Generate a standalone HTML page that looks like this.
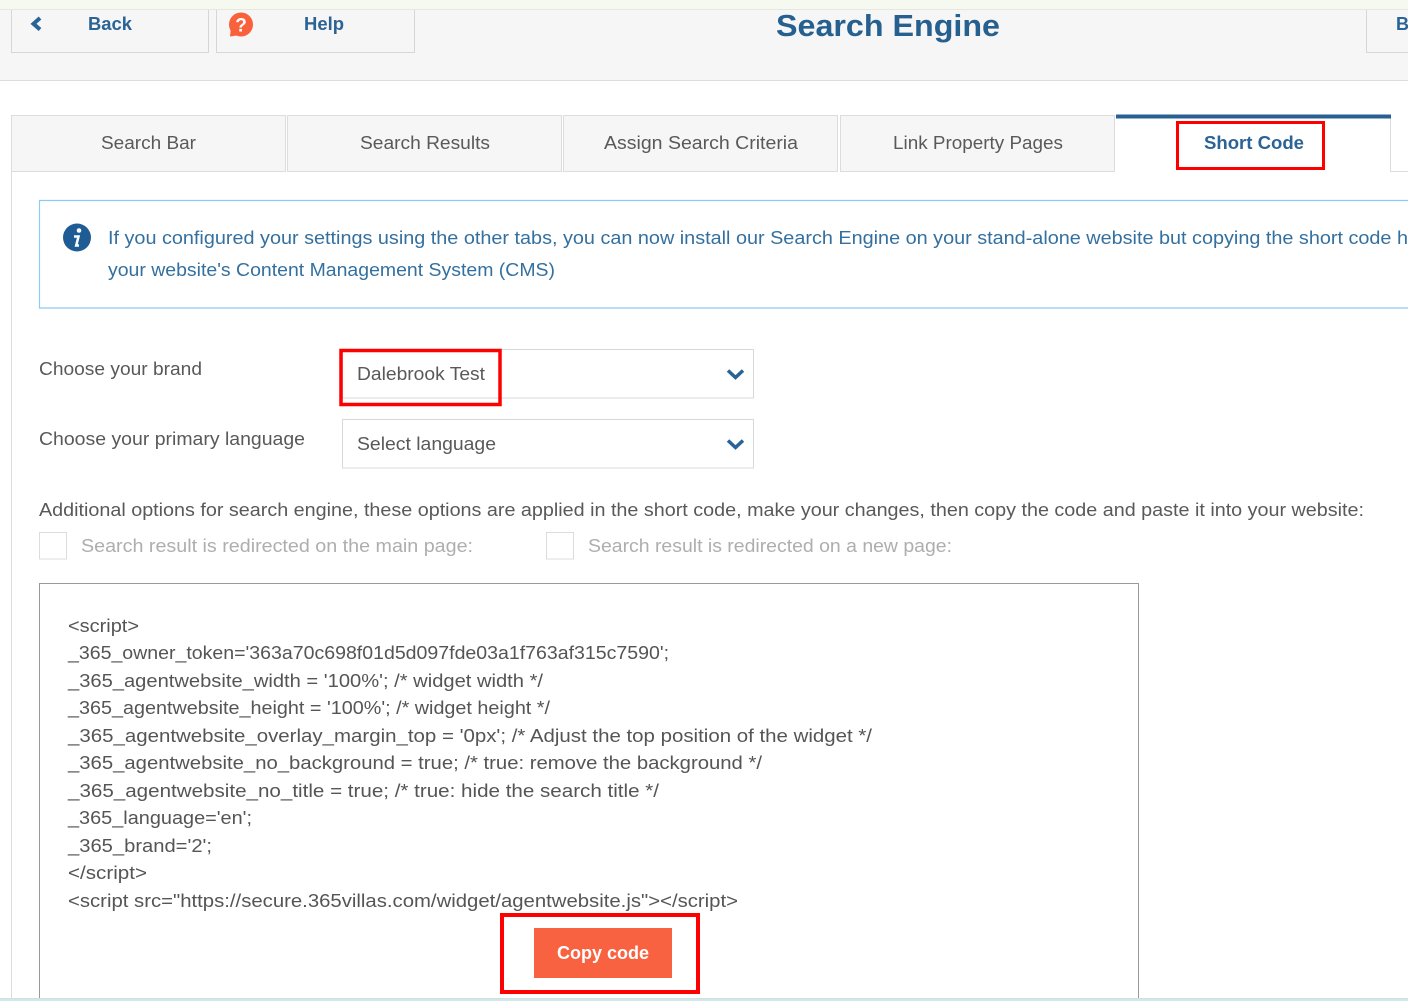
<!DOCTYPE html>
<html lang="en"><head><meta charset="utf-8"><title>Search Engine</title>
<style>
html,body{margin:0;padding:0;background:#fff;width:1408px;height:1001px;overflow:hidden}
svg{display:block}
text{font-family:"Liberation Sans",sans-serif}
.g{fill:#595959;font-size:18px}
.c{fill:#555;font-size:18.5px}
.b{fill:#2a6395;font-weight:bold;font-size:18px}
.i{fill:#34709f;font-size:18px}
.l{fill:#aeaeae;font-size:18px}
</style></head><body>
<svg xmlns="http://www.w3.org/2000/svg" width="1408" height="1001" viewBox="0 0 1408 1001">
<rect width="1408" height="1001" fill="#fff"/>
<!-- header -->
<rect width="1408" height="9" fill="#f6f9f0"/>
<rect y="9" width="1408" height="72" fill="#f6f6f6"/>
<rect y="9" width="1408" height="1" fill="#e6e8e0"/>
<rect y="80" width="1408" height="1" fill="#dcdcdc"/>
<path d="M11.500 10V52.500H208.500V10M216.500 10V52.500H414.500V10M1366.500 10V52.500H1408" fill="none" stroke="#d6d6d6"/>
<path d="M40 18L33.500 23.800L40 29.500" fill="none" stroke="#2a6395" stroke-width="4"/>
<text class="b" x="88" y="30" textLength="44" lengthAdjust="spacingAndGlyphs">Back</text>
<circle cx="241" cy="24.500" r="12" fill="#f9603c"/>
<path d="M231 27L230 36.500L240 35Z" fill="#f9603c"/>
<text x="241" y="31.500" text-anchor="middle" fill="#fff" font-size="19" font-weight="bold">?</text>
<text class="b" x="304" y="30" textLength="40" lengthAdjust="spacingAndGlyphs">Help</text>
<text class="b" x="1396" y="30">B</text>
<text x="776" y="36" fill="#26608f" font-size="31px" font-weight="bold" textLength="224" lengthAdjust="spacingAndGlyphs">Search Engine</text>
<!-- tabs -->
<rect x="11.500" y="115.500" width="274" height="56" fill="#f6f6f6" stroke="#dcdcdc"/>
<rect x="287.500" y="115.500" width="274" height="56" fill="#f6f6f6" stroke="#dcdcdc"/>
<rect x="563.500" y="115.500" width="274" height="56" fill="#f6f6f6" stroke="#dcdcdc"/>
<rect x="840.500" y="115.500" width="274" height="56" fill="#f6f6f6" stroke="#dcdcdc"/>
<path d="M1390.500 118V171.500H1408" fill="none" stroke="#dcdcdc"/>
<path d="M11.500 171V999" fill="none" stroke="#dcdcdc"/>
<rect x="1116" y="114.500" width="275" height="4" fill="#2a5f94"/>
<text class="g" x="101" y="149" textLength="95" lengthAdjust="spacingAndGlyphs">Search Bar</text>
<text class="g" x="360" y="149" textLength="130" lengthAdjust="spacingAndGlyphs">Search Results</text>
<text class="g" x="604" y="149" textLength="194" lengthAdjust="spacingAndGlyphs">Assign Search Criteria</text>
<text class="g" x="893" y="149" textLength="170" lengthAdjust="spacingAndGlyphs">Link Property Pages</text>
<text class="b" x="1204" y="149" textLength="100" lengthAdjust="spacingAndGlyphs">Short Code</text>
<rect x="1177.500" y="122.500" width="146" height="46" fill="none" stroke="#f00" stroke-width="3"/>
<!-- info -->
<path d="M1408 200.500H39.500V308H1408" fill="none" stroke="#8ccbf5" stroke-width="1.200"/>
<circle cx="77" cy="237.500" r="14" fill="#1f5c94"/>
<circle cx="79" cy="230.500" r="2.300" fill="#fff"/>
<path d="M74 236.500H78.500L76.200 245.500H79" fill="none" stroke="#fff" stroke-width="2.500"/>
<text class="i" x="108" y="244" textLength="1300" lengthAdjust="spacingAndGlyphs">If you configured your settings using the other tabs, you can now install our Search Engine on your stand-alone website but copying the short code h</text>
<text class="i" x="108" y="276" textLength="447" lengthAdjust="spacingAndGlyphs">your website's Content Management System (CMS)</text>
<!-- form -->
<text class="g" x="39" y="375" textLength="163" lengthAdjust="spacingAndGlyphs">Choose your brand</text>
<text class="g" x="39" y="445" textLength="266" lengthAdjust="spacingAndGlyphs">Choose your primary language</text>
<rect x="342.500" y="349.500" width="411" height="48.500" fill="#fff" stroke="#d8d8d8"/>
<rect x="342.500" y="419.500" width="411" height="48.500" fill="#fff" stroke="#d8d8d8"/>
<path d="M728 370.500L735.500 377.500L743 370.500" fill="none" stroke="#2a6395" stroke-width="3.500"/>
<path d="M728 440.500L735.500 447.500L743 440.500" fill="none" stroke="#2a6395" stroke-width="3.500"/>
<text class="g" x="357" y="380" textLength="128" lengthAdjust="spacingAndGlyphs">Dalebrook Test</text>
<text class="g" x="357" y="450" textLength="139" lengthAdjust="spacingAndGlyphs">Select language</text>
<rect x="341" y="350.500" width="159" height="54" fill="none" stroke="#f00" stroke-width="3.500"/>
<text class="g" x="39" y="516" textLength="1325" lengthAdjust="spacingAndGlyphs">Additional options for search engine, these options are applied in the short code, make your changes, then copy the code and paste it into your website:</text>
<rect x="39.500" y="532.500" width="27" height="26.500" fill="#fff" stroke="#dcdcdc"/>
<rect x="546.500" y="532.500" width="27" height="26.500" fill="#fff" stroke="#dcdcdc"/>
<text class="l" x="81" y="552" textLength="392" lengthAdjust="spacingAndGlyphs">Search result is redirected on the main page:</text>
<text class="l" x="588" y="552" textLength="364" lengthAdjust="spacingAndGlyphs">Search result is redirected on a new page:</text>
<!-- code -->
<path d="M39.500 999V583.500H1138.500V999" fill="none" stroke="#999"/>
<text class="c" x="68" y="632" textLength="71" lengthAdjust="spacingAndGlyphs">&lt;script&gt;</text>
<text class="c" x="68" y="659" textLength="601" lengthAdjust="spacingAndGlyphs">_365_owner_token='363a70c698f01d5d097fde03a1f763af315c7590';</text>
<text class="c" x="68" y="687" textLength="475" lengthAdjust="spacingAndGlyphs">_365_agentwebsite_width = '100%'; /* widget width */</text>
<text class="c" x="68" y="714" textLength="482" lengthAdjust="spacingAndGlyphs">_365_agentwebsite_height = '100%'; /* widget height */</text>
<text class="c" x="68" y="742" textLength="804" lengthAdjust="spacingAndGlyphs">_365_agentwebsite_overlay_margin_top = '0px'; /* Adjust the top position of the widget */</text>
<text class="c" x="68" y="769" textLength="694" lengthAdjust="spacingAndGlyphs">_365_agentwebsite_no_background = true; /* true: remove the background */</text>
<text class="c" x="68" y="797" textLength="591" lengthAdjust="spacingAndGlyphs">_365_agentwebsite_no_title = true; /* true: hide the search title */</text>
<text class="c" x="68" y="824" textLength="184" lengthAdjust="spacingAndGlyphs">_365_language='en';</text>
<text class="c" x="68" y="852" textLength="144" lengthAdjust="spacingAndGlyphs">_365_brand='2';</text>
<text class="c" x="68" y="879" textLength="79" lengthAdjust="spacingAndGlyphs">&lt;/script&gt;</text>
<text class="c" x="68" y="907" textLength="670" lengthAdjust="spacingAndGlyphs">&lt;script src="https://secure.365villas.com/widget/agentwebsite.js"&gt;&lt;/script&gt;</text>
<rect x="534" y="928" width="138" height="50" fill="#f96240"/>
<text x="557" y="959" fill="#fff" font-size="18" font-weight="bold" textLength="92" lengthAdjust="spacingAndGlyphs">Copy code</text>
<rect x="502" y="915" width="196" height="77" fill="none" stroke="#f00" stroke-width="4"/>
<!-- bottom -->
<rect y="998" width="1408" height="1" fill="#d8dcdc"/>
<rect y="999" width="1408" height="2" fill="#cdeaea"/>
</svg>
</body></html>
